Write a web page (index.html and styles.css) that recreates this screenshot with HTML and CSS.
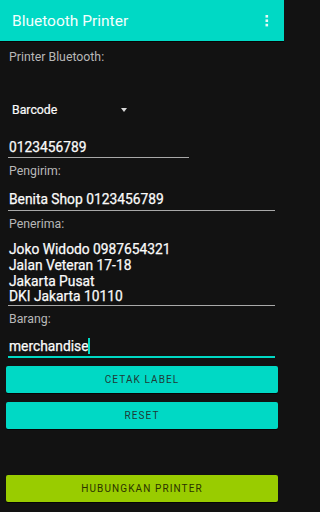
FILE: index.html
```html
<!DOCTYPE html>
<html>
<head>
<meta charset="utf-8">
<link rel="stylesheet" href="styles.css">
</head>
<body>
<div class="app">
  <header class="bar">
    <div class="title">Bluetooth Printer</div>
    <svg class="kebab" width="4" height="14" viewBox="0 0 4 14">
      <rect x="0.5" y="1" width="2.6" height="2.6" fill="#e6faf7"/>
      <rect x="0.5" y="5.4" width="2.6" height="2.6" fill="#e6faf7"/>
      <rect x="0.5" y="9.8" width="2.6" height="2.6" fill="#e6faf7"/>
    </svg>
  </header>
  <main class="content">
    <div class="label first">Printer Bluetooth:</div>
    <div class="spinner-empty"></div>
    <div class="spinner">
      <span class="spinner-text">Barcode</span>
      <span class="caret"></span>
    </div>
    <div class="field short">0123456789</div>
    <div class="label">Pengirim:</div>
    <div class="field mid">Benita Shop 0123456789</div>
    <div class="label">Penerima:</div>
    <div class="field multi">Joko Widodo 0987654321<br>Jalan Veteran 17-18<br>Jakarta Pusat<br>DKI Jakarta 10110</div>
    <div class="label">Barang:</div>
    <div class="field focused">merchandise<span class="cursor"></span></div>
  </main>
  <div class="buttons">
    <button class="btn teal">CETAK LABEL</button>
    <button class="btn teal second">RESET</button>
    <button class="btn green third">HUBUNGKAN PRINTER</button>
  </div>
</div>
</body>
</html>
```
FILE: styles.css
```css
html, body {
  margin: 0;
  padding: 0;
  background: #121212;
}
body {
  width: 284px;
  height: 512px;
  overflow: hidden;
  font-family: Roboto, "Noto Sans", sans-serif;
}
.bar {
  height: 41px;
  background: #00d9c5;
  border-bottom: 1px solid #050505;
  display: flex;
  align-items: center;
  justify-content: space-between;
  padding: 0 15px 0 12px;
}
.title {
  color: #f4fffd;
  font-size: 15.5px;
  line-height: 20px;
}
.kebab {
  display: block;
}
.content {
  padding: 0 9px 0 8px;
}
.label {
  font-size: 12.3px;
  line-height: 16px;
  color: #b8b8b8;
  padding-left: 1px;
  margin-top: 5px;
}
.label.first {
  margin-top: 7px;
}
.spinner-empty {
  height: 31px;
}
.spinner {
  height: 28px;
  display: flex;
  align-items: center;
  padding-left: 4px;
  color: #fafafa;
  font-size: 12.3px;
  -webkit-text-stroke: 0.2px #fafafa;
}
.spinner-text {
  width: 109px;
}
.caret {
  width: 0;
  height: 0;
  border-left: 3.5px solid transparent;
  border-right: 3.5px solid transparent;
  border-top: 4px solid #d8d8d8;
}
.field {
  color: #fafafa;
  font-size: 13.8px;
  line-height: 16px;
  padding-left: 1px;
  border-bottom: 1px solid #a8a8a8;
  padding-bottom: 2px;
  -webkit-text-stroke: 0.25px #fafafa;
}
.field.short {
  width: 180px;
  margin-top: 15px;
  padding-bottom: 2px;
}
.field.mid {
  margin-top: 12px;
  padding-bottom: 3px;
}
.field.multi {
  margin-top: 10px;
  padding-bottom: 0px;
  line-height: 15.8px;
}
.field.focused {
  margin-top: 11px;
  padding-bottom: 2px;
  border-bottom: 2px solid #00d9c5;
}
.cursor {
  display: inline-block;
  width: 1.5px;
  height: 16px;
  background: #00d9c5;
  vertical-align: -3px;
}
.buttons {
  padding: 0 6px;
  display: flex;
  flex-direction: column;
}
.btn {
  display: block;
  width: 100%;
  height: 27px;
  border: none;
  border-radius: 2px;
  font-family: Roboto, "Noto Sans", sans-serif;
  font-size: 10px;
  letter-spacing: 1.1px;
  color: #1f3a36;
  box-shadow: 0 1px 0 #050505;
  padding: 0;
  margin-top: 8px;
}
.teal {
  background: #00d9c5;
}
.green {
  background: #99cc00;
  color: #2b3300;
}
.second {
  margin-top: 9px;
}
.third {
  margin-top: 46px;
}
```
